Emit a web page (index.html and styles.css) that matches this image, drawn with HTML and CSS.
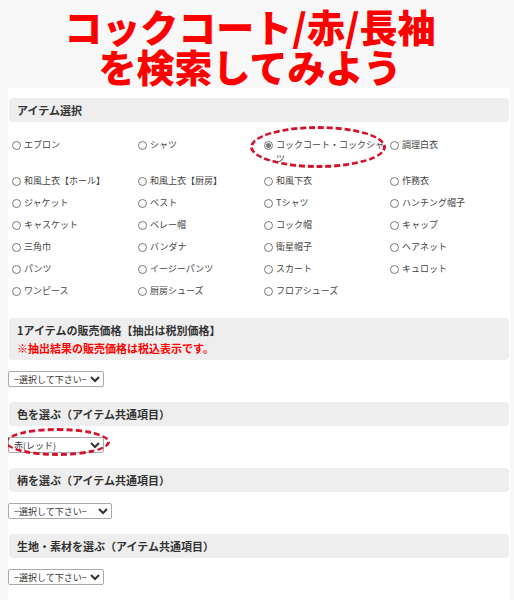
FILE: index.html
```html
<!DOCTYPE html>
<html lang="ja">
<head>
    <meta charset="UTF-8">
    <meta name="viewport" content="width=device-width, initial-scale=1.0">
    <title>アイテム検索</title>
    <link rel="stylesheet" href="styles.css">
</head>
<body>

    <h1 class="page-title">コックコート/赤/長袖<br>を検索してみよう</h1>

    <div class="search-panel">

        <!-- アイテム選択 -->
        <h3 class="search-head">アイテム選択</h3>
        <div class="item-grid">
            <label class="item"><span class="radio"></span><span>エプロン</span></label>
            <label class="item"><span class="radio"></span><span>シャツ</span></label>
            <label class="item"><span class="radio checked"></span><span>コックコート・コックシャツ</span></label>
            <label class="item"><span class="radio"></span><span>調理白衣</span></label>
            <label class="item"><span class="radio"></span><span>和風上衣【ホール】</span></label>
            <label class="item"><span class="radio"></span><span>和風上衣【厨房】</span></label>
            <label class="item"><span class="radio"></span><span>和風下衣</span></label>
            <label class="item"><span class="radio"></span><span>作務衣</span></label>
            <label class="item"><span class="radio"></span><span>ジャケット</span></label>
            <label class="item"><span class="radio"></span><span>ベスト</span></label>
            <label class="item"><span class="radio"></span><span>Tシャツ</span></label>
            <label class="item"><span class="radio"></span><span>ハンチング帽子</span></label>
            <label class="item"><span class="radio"></span><span>キャスケット</span></label>
            <label class="item"><span class="radio"></span><span>ベレー帽</span></label>
            <label class="item"><span class="radio"></span><span>コック帽</span></label>
            <label class="item"><span class="radio"></span><span>キャップ</span></label>
            <label class="item"><span class="radio"></span><span>三角巾</span></label>
            <label class="item"><span class="radio"></span><span>バンダナ</span></label>
            <label class="item"><span class="radio"></span><span>衛星帽子</span></label>
            <label class="item"><span class="radio"></span><span>ヘアネット</span></label>
            <label class="item"><span class="radio"></span><span>パンツ</span></label>
            <label class="item"><span class="radio"></span><span>イージーパンツ</span></label>
            <label class="item"><span class="radio"></span><span>スカート</span></label>
            <label class="item"><span class="radio"></span><span>キュロット</span></label>
            <label class="item"><span class="radio"></span><span>ワンピース</span></label>
            <label class="item"><span class="radio"></span><span>厨房シューズ</span></label>
            <label class="item"><span class="radio"></span><span>フロアシューズ</span></label>
        </div>

        <!-- 価格 -->
        <h3 class="search-head">1アイテムの販売価格【抽出は税別価格】<br><span class="note">※抽出結果の販売価格は税込表示です。</span></h3>
        <select class="search-select">
            <option>−選択して下さい−</option>
        </select>

        <!-- 色 -->
        <h3 class="search-head">色を選ぶ（アイテム共通項目）</h3>
        <select class="search-select">
            <option>赤(レッド)</option>
        </select>

        <!-- 柄 -->
        <h3 class="search-head">柄を選ぶ（アイテム共通項目）</h3>
        <select class="search-select wide">
            <option>−選択して下さい−</option>
        </select>

        <!-- 生地 -->
        <h3 class="search-head">生地・素材を選ぶ（アイテム共通項目）</h3>
        <select class="search-select">
            <option>−選択して下さい−</option>
        </select>

        <div class="search-head blank"></div>

        <!-- 赤い点線の囲み -->
        <div class="mark mark-item"></div>
        <div class="mark mark-color"></div>
    </div>

</body>
</html>
```

FILE: styles.css
```css
body {
    font-family: "Noto Sans CJK JP", "Noto Sans", sans-serif;
    background-color: #f8f8f8;
    margin: 0;
    padding: 0;
    color: #333;
    overflow: hidden;
}
.page-title {
    margin: 0 0 2px;
    padding: 6px 14px 0 0;
    text-align: center;
    font-size: 38px;
    line-height: 40px;
    font-weight: 900;
    color: #ff0000;
}
.search-panel {
    position: relative;
    background-color: #ffffff;
    margin: 0 4px 0 8px;
    padding: 10px 0 0;
    height: 502px;
    overflow: hidden;
}
.search-head {
    margin: 0 1px;
    padding: 3px 8px;
    background-color: #eeeeee;
    border-radius: 4px;
    font-size: 11px;
    line-height: 18px;
    font-weight: bold;
    color: #333;
}
.search-head.blank {
    height: 18px;
}
.search-head .note {
    color: #ff0000;
}
.item-grid {
    display: grid;
    grid-template-columns: repeat(4, 126px);
    padding-left: 4px;
    margin: 12px 0 16px;
}
.item {
    display: flex;
    align-items: flex-start;
    padding: 4px 0;
    font-size: 9px;
    line-height: 14px;
    color: #444;
}
.radio {
    flex: none;
    width: 7px;
    height: 7px;
    margin: 3px 3px 0 0;
    border: 1px solid #777;
    border-radius: 50%;
    background-color: #fff;
    position: relative;
}
.radio.checked::after {
    content: "";
    position: absolute;
    left: 1px;
    top: 1px;
    width: 5px;
    height: 5px;
    border-radius: 50%;
    background-color: #777;
}
.search-select {
    display: block;
    width: 96px;
    height: 16px;
    margin: 11px 0 15px;
    padding: 0 0 0 1px;
    font-family: "Noto Sans CJK JP", sans-serif;
    font-size: 9px;
    color: #333;
    background-color: #fff;
    border: 1px solid #aaa;
    border-radius: 2px;
}
.search-select.wide {
    width: 104px;
}
.mark {
    position: absolute;
    border: 3px dashed #d3132a;
    border-radius: 50%;
}
.mark-item {
    left: 242px;
    top: 38px;
    width: 130px;
    height: 36px;
}
.mark-color {
    left: -3px;
    top: 340px;
    width: 99px;
    height: 22px;
}
```
